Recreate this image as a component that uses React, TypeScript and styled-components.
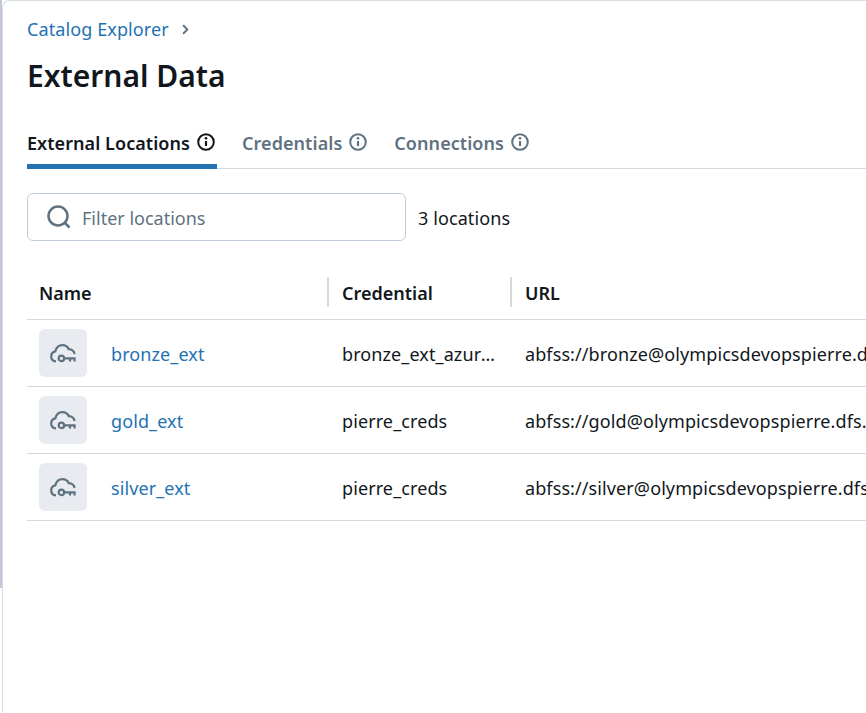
import React from "react";
import styled, { createGlobalStyle } from "styled-components";
import { FiChevronRight } from "react-icons/fi";

const GlobalStyle = createGlobalStyle`
  html, body {
    margin: 0;
    height: 100%;
    overflow: hidden;
    background: #fff;
  }
  body {
    font-family: "Noto Sans", "Open Sans", "Liberation Sans", sans-serif;
    letter-spacing: 0.1px;
    color: #11171c;
  }
`;

const InfoIcon = () => (
  <svg width="18" height="18" viewBox="0 0 18 18" fill="none" stroke="currentColor">
    <circle cx="9" cy="9" r="7.8" strokeWidth="2" />
    <path d="M9 8v5" strokeWidth="2.2" />
    <circle cx="9" cy="5.3" r="1.3" fill="currentColor" stroke="none" />
  </svg>
);

const SearchIcon = () => (
  <svg width="24" height="24" viewBox="0 0 24 24" fill="none" stroke="currentColor" strokeWidth="2.5">
    <circle cx="11" cy="11" r="9.5" />
    <path d="M18 18l4.5 4.5" />
  </svg>
);

const CloudKeyIcon = () => (
  <svg width="26" height="24" viewBox="0 0 26 24" fill="none" stroke="currentColor" strokeWidth="2.2">
    <path d="M6 20.4C3 20 1.2 18 1.2 15.4c0-2.5 1.7-4.5 4.1-5C6.3 6.6 9 4.2 12.4 4.2c2.9 0 5.2 1.5 6.4 4 2.8.2 5.2 1.8 5.8 4.8" />
    <circle cx="11.4" cy="17.4" r="2.7" strokeWidth="2.2" />
    <path d="M14 17.4H25.6M20 17v3.6M24.6 17v3.6" strokeWidth="2.2" />
  </svg>
);

const locations = [
  { name: "bronze_ext", credential: "bronze_ext_azure_cred", url: "abfss://bronze@olympicsdevopspierre.dfs.core.windows.net/" },
  { name: "gold_ext", credential: "pierre_creds", url: "abfss://gold@olympicsdevopspierre.dfs.core.windows.net/" },
  { name: "silver_ext", credential: "pierre_creds", url: "abfss://silver@olympicsdevopspierre.dfs.core.windows.net/" },
];

const tabs = [
  { label: "External Locations", active: true },
  { label: "Credentials", active: false },
  { label: "Connections", active: false },
];

export default function App() {
  return (
    <Shell>
      <GlobalStyle />
      <Rail />
      <Panel>
        <Breadcrumb>
          <CrumbLink>Catalog Explorer</CrumbLink>
          <CrumbChevron>
            <FiChevronRight />
          </CrumbChevron>
        </Breadcrumb>
        <Title>External Data</Title>
        <TabBar>
          {tabs.map((tab) => (
            <Tab key={tab.label} $active={tab.active}>
              {tab.label}
              <InfoIcon />
            </Tab>
          ))}
        </TabBar>
        <FilterRow>
          <SearchBox>
            <SearchGlyph>
              <SearchIcon />
            </SearchGlyph>
            <SearchInput placeholder="Filter locations" readOnly />
          </SearchBox>
          <Count>3 locations</Count>
        </FilterRow>
        <Table>
          <HeaderRow>
            <HeaderCell>Name</HeaderCell>
            <HeaderCell $divided>Credential</HeaderCell>
            <HeaderCell $divided>URL</HeaderCell>
          </HeaderRow>
          {locations.map((loc) => (
            <Row key={loc.name}>
              <NameCell>
                <IconTile>
                  <CloudKeyIcon />
                </IconTile>
                <NameLink>{loc.name}</NameLink>
              </NameCell>
              <Cell>{loc.credential}</Cell>
              <Cell>{loc.url}</Cell>
            </Row>
          ))}
        </Table>
      </Panel>
    </Shell>
  );
}

const Shell = styled.div`
  display: flex;
  width: 866px;
  height: 713px;
  overflow: hidden;
`;

const Rail = styled.div`
  flex: none;
  width: 2px;
  height: 588px;
  background: #c4c8d4;
`;

const Panel = styled.main`
  flex: none;
  box-sizing: border-box;
  width: 864px;
  height: 713px;
  padding: 15px 0 0 24px;
  background: #fff;
  border-left: 1px solid #d8dfe7;
  border-top: 1px solid #d8dfe7;
  border-top-left-radius: 8px;
  overflow: hidden;
`;

const Breadcrumb = styled.div`
  display: flex;
  align-items: center;
  gap: 9px;
  height: 26px;
`;

const CrumbLink = styled.a`
  font-size: 18px;
  line-height: 26px;
  color: #2272b4;
`;

const CrumbChevron = styled.span`
  display: flex;
  font-size: 15px;
  color: #5f7281;

  svg {
    stroke-width: 3;
  }
`;

const Title = styled.h1`
  margin: 12px 0 0;
  font-size: 30px;
  line-height: 44px;
  font-weight: 600;
  letter-spacing: 0;
  color: #11171c;
`;

const TabBar = styled.div`
  display: flex;
  gap: 25px;
  height: 48px;
  margin-top: 23px;
  box-sizing: border-box;
  border-bottom: 1px solid #d1d9e1;
`;

const Tab = styled.div<{ $active: boolean }>`
  display: flex;
  align-items: flex-start;
  gap: 7px;
  height: 48px;
  box-sizing: border-box;
  padding: 9px 2px 0 0;
  font-size: 18px;
  line-height: 26px;
  font-weight: 600;
  letter-spacing: 0.06px;
  color: ${(p) => (p.$active ? "#11171c" : "#5f7281")};
  border-bottom: ${(p) => (p.$active ? "5px solid #2272b4" : "none")};

  svg {
    margin-top: 3px;
  }
`;

const FilterRow = styled.div`
  display: flex;
  align-items: center;
  gap: 12px;
  margin-top: 24px;
`;

const SearchBox = styled.div`
  display: flex;
  align-items: center;
  gap: 11px;
  box-sizing: border-box;
  width: 379px;
  height: 48px;
  padding: 0 19px;
  border: 1px solid #c0cdd8;
  border-radius: 6px;
`;

const SearchGlyph = styled.span`
  display: flex;
  color: #5f7281;
`;

const SearchInput = styled.input`
  flex: 1;
  min-width: 0;
  border: none;
  outline: none;
  padding: 2px 0 0;
  font: inherit;
  font-size: 18px;
  color: #11171c;

  &::placeholder {
    color: #5f7281;
    opacity: 1;
  }
`;

const Count = styled.span`
  padding-top: 2px;
  font-size: 18px;
  color: #11171c;
`;

const Table = styled.div`
  width: 1100px;
  margin-top: 29px;
`;

const columns = "300px 183px 1fr";

const HeaderRow = styled.div`
  display: grid;
  grid-template-columns: ${columns};
  align-items: start;
  height: 50px;
  padding-top: 7px;
  box-sizing: border-box;
  border-bottom: 1px solid #d1d9e1;
`;

const HeaderCell = styled.div<{ $divided?: boolean }>`
  display: flex;
  align-items: center;
  height: 30px;
  box-sizing: border-box;
  padding-top: 2px;
  padding-left: ${(p) => (p.$divided ? "13px" : "12px")};
  font-size: 18px;
  font-weight: 600;
  letter-spacing: 0;
  border-left: ${(p) => (p.$divided ? "2px solid #d1d9e1" : "none")};
`;

const Row = styled.div`
  display: grid;
  grid-template-columns: ${columns};
  align-items: center;
  height: 67px;
  box-sizing: border-box;
  border-bottom: 1px solid #d1d9e1;
`;

const Cell = styled.div`
  padding: 2px 14px 0 15px;
  font-size: 18px;
  white-space: nowrap;
  overflow: hidden;
  text-overflow: ellipsis;
`;

const NameCell = styled.div`
  display: flex;
  align-items: center;
  gap: 24px;
  padding-left: 12px;
`;

const IconTile = styled.div`
  display: flex;
  align-items: center;
  justify-content: center;
  width: 48px;
  height: 48px;
  border-radius: 6px;
  background: #e8ecf0;
  color: #5f7281;
`;

const NameLink = styled.a`
  padding-top: 2px;
  font-size: 18px;
  color: #2272b4;
`;
